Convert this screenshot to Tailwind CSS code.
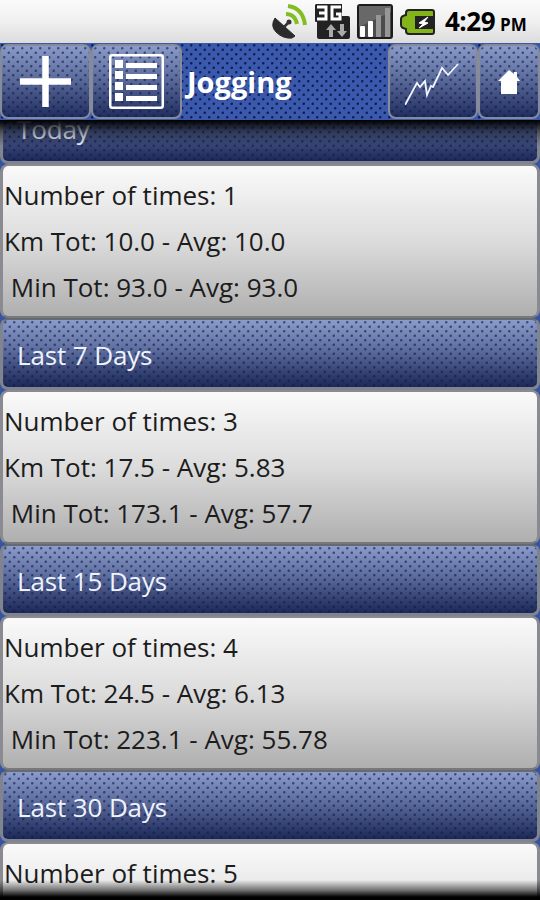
<!DOCTYPE html>
<html lang="en">
  <head>
    <meta charset="UTF-8" />
    <meta name="viewport" content="width=device-width, initial-scale=1.0" />
    <title>Jogging</title>
    <script src="https://cdn.jsdelivr.net/npm/@tailwindcss/browser@4"></script>
  </head>
  <body class="h-[900px] w-[540px] overflow-hidden bg-[#3654a4] font-['Open_Sans','Noto_Sans',sans-serif]">
    <div class="flex h-[900px] flex-col overflow-hidden">
      <!-- Status bar -->
      <div class="flex h-[43px] shrink-0 items-center bg-linear-to-b from-[#fbfbfb] via-[#f0f0f0] to-[#dcdcdc] pl-[270px]">
        <svg class="h-[43px] w-[172px] shrink-0" viewBox="270 0 172 43">
          <!-- gps -->
          <path d="M275 18Q270 26 276 32Q283 39 292 38L295 36Z" fill="#2b2b2b" stroke="#2b2b2b" stroke-linejoin="round" />
          <path d="M284 27l5-5" stroke="#333" stroke-width="2.500" />
          <circle cx="289" cy="22" r="2.500" fill="#333" />
          <path d="M286 14Q295 14 297 24M288 6Q303 8 305 25" fill="none" stroke="#84bd22" stroke-width="4" />
          <!-- 3G -->
          <path d="M316 4h26v12h6q2 0 2 2v19q0 2-2 2h-29q-2 0-2-2V22h-1q-1 0-1-1V5z" fill="#222" />
          <path d="M317 7h9v12h-9M319 13h7M341 7h-9v12h8v-5h-4" fill="none" stroke="#fff" stroke-width="3" />
          <path d="M331 24l5 6h-3v7h-4v-7h-3zM342 37l-5-6h3v-7h4v7h3z" fill="#aaa" />
          <!-- signal -->
          <rect x="358" y="5" width="34" height="33" rx="2" fill="#4c4c4c" stroke="#1c1c1c" stroke-width="2" />
          <path d="M359 6h32v6L359 27z" fill="#686868" />
          <rect x="360" y="26" width="5" height="11" rx="1" fill="#fff" />
          <rect x="368" y="21" width="5" height="16" rx="1" fill="#fff" />
          <path d="M376 15h5v22h-5zM385 8h5v29h-5z" fill="#969696" />
          <!-- battery -->
          <path d="M409 10h23q2 0 2 2v20q0 2-2 2h-23q-3 0-3-3v-2q-5-1-5-4v-6q0-3 5-4v-2q0-3 3-3z" fill="#83b51b" stroke="#222" stroke-width="2" />
          <path d="M415 16h18v13h-18z" fill="#222" />
          <path d="M428 17l-9 6 4 1-4 4 9-5-4-1z" fill="#fff" stroke="#fff" />
        </svg>
        <div class="flex items-baseline gap-[5px] pl-[3px] font-bold text-black">
          <span class="text-[26px] leading-[43px] tracking-[-0.5px]">4:29</span>
          <span class="text-[17px] font-bold">PM</span>
        </div>
      </div>

      <!-- Title bar -->
      <div class="relative z-10 flex h-[77px] shrink-0 bg-[#3a59ac] bg-[radial-gradient(circle_at_25%_25%,#101f55_0.8px,transparent_1.7px),radial-gradient(circle_at_75%_75%,#101f55_0.8px,transparent_1.7px)] bg-[size:9px_9px] pt-px">
        <button class="flex h-[75px] w-[91px] items-center justify-center rounded-lg border-2 border-[#858b9b] bg-[radial-gradient(circle_at_25%_25%,#101c4499_0.8px,transparent_1.7px),radial-gradient(circle_at_75%_75%,#101c4499_0.8px,transparent_1.7px),linear-gradient(#8a9bca,#5c6c9c_45%,#202d60)] bg-[size:9px_9px,9px_9px,100%_100%]">
          <svg class="h-[51px] w-[51px]" viewBox="0 0 51 51">
            <path d="M25.500 0v51M0 25.500h51" stroke="#fff" stroke-width="6.500" />
          </svg>
        </button>
        <button class="flex h-[75px] w-[91px] items-center justify-center rounded-lg border-2 border-[#858b9b] bg-[radial-gradient(circle_at_25%_25%,#101c4499_0.8px,transparent_1.7px),radial-gradient(circle_at_75%_75%,#101c4499_0.8px,transparent_1.7px),linear-gradient(#8a9bca,#5c6c9c_45%,#202d60)] bg-[size:9px_9px,9px_9px,100%_100%]">
          <svg class="h-[55px] w-[55px]" viewBox="0 0 55 55">
            <rect x="1.250" y="1.250" width="52.500" height="52.500" rx="2" fill="none" stroke="#fff" stroke-width="2.500" />
            <path d="M6 6h8v8H6zM6 17h8v8H6zM6 28h8v8H6zM6 39h8v8H6zM17 9h31v5H17zM17 20h31v5H17zM17 31h31v5H17zM17 42h31v5H17z" fill="#fff" />
          </svg>
        </button>
        <h1 class="flex-1 pl-[5px] text-[29px] leading-[76px] font-bold text-white">Jogging</h1>
        <button class="flex h-[75px] w-[90px] items-center justify-center rounded-lg border-2 border-[#858b9b] bg-[radial-gradient(circle_at_25%_25%,#101c4499_0.8px,transparent_1.7px),radial-gradient(circle_at_75%_75%,#101c4499_0.8px,transparent_1.7px),linear-gradient(#8a9bca,#5c6c9c_45%,#202d60)] bg-[size:9px_9px,9px_9px,100%_100%]">
          <svg class="h-[46px] w-[56px]" viewBox="405 59 56 46">
            <path d="M405 105L417 83l3 4 5-6 2 14 4-9 2 1 9-19 6 7 10-11" fill="none" stroke="#f0f4ff" stroke-width="1.800" />
          </svg>
        </button>
        <button class="flex h-[75px] w-[62px] items-center justify-center rounded-lg border-2 border-[#858b9b] bg-[radial-gradient(circle_at_25%_25%,#101c4499_0.8px,transparent_1.7px),radial-gradient(circle_at_75%_75%,#101c4499_0.8px,transparent_1.7px),linear-gradient(#8a9bca,#5c6c9c_45%,#202d60)] bg-[size:9px_9px,9px_9px,100%_100%]">
          <svg class="h-6 w-6" viewBox="0 0 24 24">
            <path d="M12 0l5 4V2h3v5l3 4h-3v13H4V11H1z" fill="#fff" />
          </svg>
        </button>
      </div>

      <!-- Statistics, scrolled a little under the title bar -->
      <div class="relative h-[780px] overflow-hidden">
        <div id="stats" class="-mt-7"></div>
        <div class="absolute inset-x-0 top-0 h-[26px] bg-linear-to-b from-black via-black/35 to-transparent"></div>
        <div class="absolute inset-x-0 bottom-0 h-5 bg-linear-to-t from-black from-15% via-black/50 to-transparent"></div>
      </div>
    </div>
    <script>
      const periods = [
        { name: "Today", times: "1", km: "10.0", kmAvg: "10.0", min: "93.0", minAvg: "93.0" },
        { name: "Last 7 Days", times: "3", km: "17.5", kmAvg: "5.83", min: "173.1", minAvg: "57.7" },
        { name: "Last 15 Days", times: "4", km: "24.5", kmAvg: "6.13", min: "223.1", minAvg: "55.78" },
        { name: "Last 30 Days", times: "5" },
      ];

      document.getElementById("stats").innerHTML = periods
        .map(
          (p) => `
            <h2 class="h-[72px] rounded-lg border-[3px] border-t-2 border-[#80848f] border-t-[#666a72] bg-[radial-gradient(circle_at_25%_25%,#101c4499_0.8px,transparent_1.7px),radial-gradient(circle_at_75%_75%,#101c4499_0.8px,transparent_1.7px),linear-gradient(#8b9ccb,#5c6c9e_45%,#1b2858)] bg-[size:9px_9px,9px_9px,100%_100%] pl-[14px] text-[26px] leading-[71px] tracking-[-0.13px] text-[#eef2fb]">${p.name}</h2>
            <div class="h-[154px] rounded-lg border-[3px] border-y-2 border-[#8a8b90] border-b-[#77787b] bg-linear-to-b from-[#fafafa] via-[#dcdcdc] to-[#afafaf] pt-[6px] pl-px text-[26px] leading-[46px] whitespace-pre text-[#1c1c1c]"><p>Number of times: ${p.times}</p>${
              p.km
                ? `<p>Km Tot: ${p.km} - Avg: ${p.kmAvg}</p><p> Min Tot: ${p.min} - Avg: ${p.minAvg}</p>`
                : ""
            }</div>
          `
        )
        .join("");
    </script>
  </body>
</html>
